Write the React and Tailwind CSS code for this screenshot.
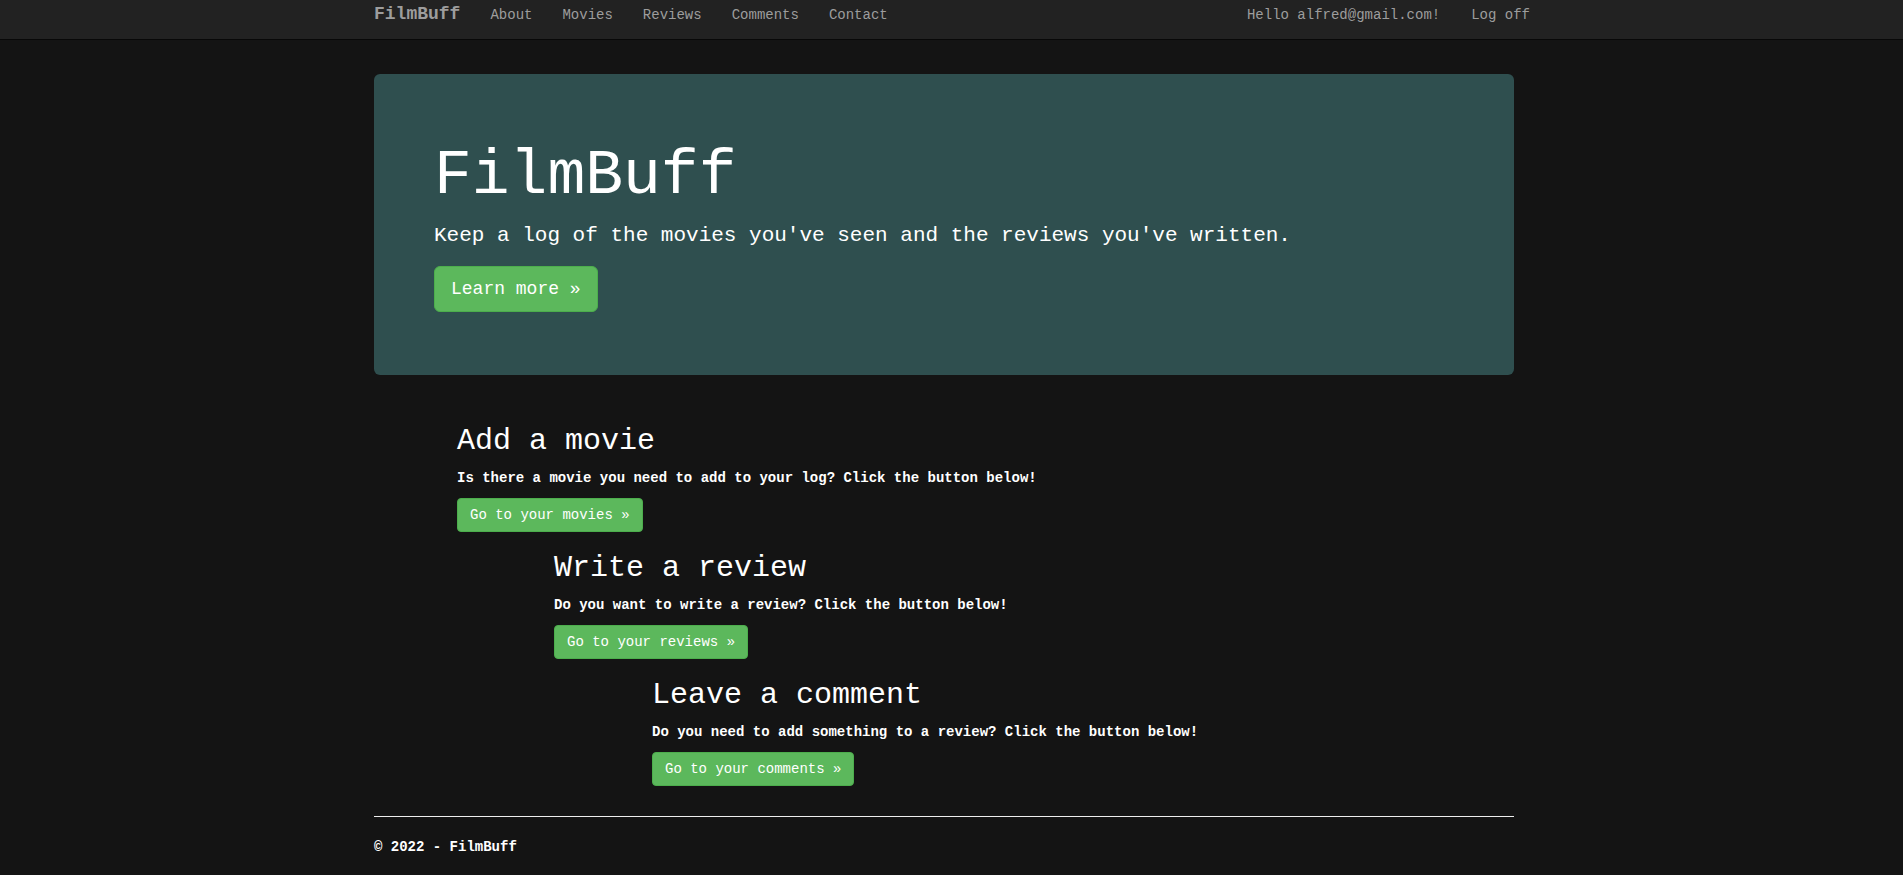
import React from "react";

const font = { fontFamily: '"Liberation Mono", "Courier New", monospace' };

function Section({ offset, title, text, button }) {
  return (
    <div className={offset}>
      <h2 className="mt-[20px] mb-[10px] text-[30px] leading-[33px] font-normal text-white">{title}</h2>
      <p className="mb-[10px] text-[14px] leading-[20px] font-bold text-white">{text}</p>
      <p className="mb-[10px] leading-[20px]">
        <a className="inline-block rounded-[4px] border border-[#4cae4c] bg-[#5cb85c] px-[12px] py-[6px] text-[14px] leading-[20px] text-white">
          {button} »
        </a>
      </p>
    </div>
  );
}

export default function App() {
  return (
    <div className="min-h-screen bg-[#141414] text-white" style={font}>
      <nav className="h-[40px] border-b border-[#080808] bg-[#222222]">
        <div className="ml-[374px] flex w-[1156px] items-baseline justify-between pt-[4px] leading-[20px]">
          <div className="flex items-baseline">
            <span className="text-[18px] font-bold text-[#9d9d9d]">FilmBuff</span>
            <div className="ml-[30px] flex items-baseline gap-[30px] text-[14px] text-[#9d9d9d]">
              <a>About</a>
              <a>Movies</a>
              <a>Reviews</a>
              <a>Comments</a>
              <a>Contact</a>
            </div>
          </div>
          <div className="flex items-baseline gap-[31px] text-[14px] text-[#9d9d9d]">
            <a>Hello alfred@gmail.com!</a>
            <a>Log off</a>
          </div>
        </div>
      </nav>

      <div className="ml-[374px] w-[1140px] pt-[34px]">
        <div className="mb-[30px] rounded-[6px] bg-[#2f4f4f] px-[60px] py-[48px]">
          <h1 className="mt-[20px] mb-[10px] text-[63px] leading-[69.3px] font-normal text-white">FilmBuff</h1>
          <p className="mb-[15px] text-[21px] leading-[30px] text-white">
            Keep a log of the movies you've seen and the reviews you've written.
          </p>
          <p className="mb-[15px] leading-[30px]">
            <a className="inline-block rounded-[6px] border border-[#4cae4c] bg-[#5cb85c] px-[16px] py-[10px] text-[18px] leading-[24px] text-white">
              Learn more »
            </a>
          </p>
        </div>

        <div className="flow-root">
          <Section
            offset="ml-[83px]"
            title="Add a movie"
            text="Is there a movie you need to add to your log? Click the button below!"
            button="Go to your movies"
          />
          <Section
            offset="ml-[180px]"
            title="Write a review"
            text="Do you want to write a review? Click the button below!"
            button="Go to your reviews"
          />
          <Section
            offset="ml-[278px]"
            title="Leave a comment"
            text="Do you need to add something to a review? Click the button below!"
            button="Go to your comments"
          />
        </div>

        <hr className="mt-[20px] mb-[20px] border-t border-[#eeeeee]" />
        <footer>
          <p className="mb-[10px] text-[14px] leading-[20px] font-bold text-white">© 2022 - FilmBuff</p>
        </footer>
      </div>
    </div>
  );
}
